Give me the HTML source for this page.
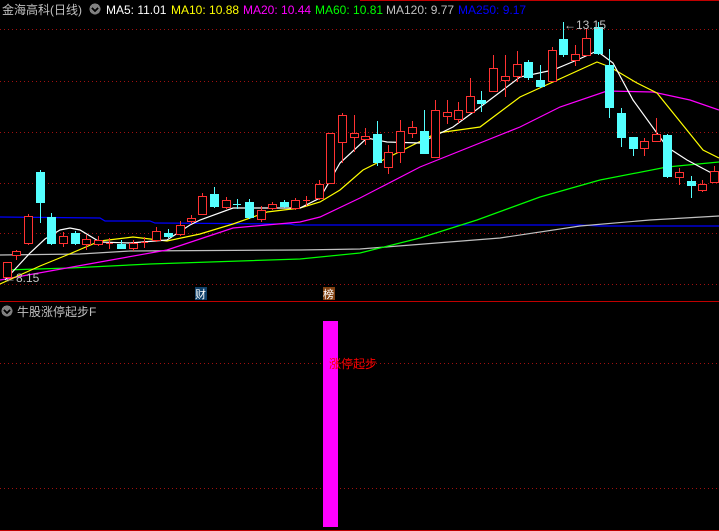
<!DOCTYPE html><html><head><meta charset="utf-8"><style>
body{margin:0;background:#000;width:719px;height:531px;overflow:hidden;font-family:"Liberation Sans","Noto Sans CJK SC",sans-serif}
svg{display:block}
</style></head><body>
<svg width="719" height="531" xmlns="http://www.w3.org/2000/svg" shape-rendering="crispEdges">
<rect width="719" height="531" fill="#000"/>
<line x1="360" y1="0.5" x2="719" y2="0.5" stroke="#c00000"/>
<g stroke="#a01010" stroke-dasharray="1,3">
<line x1="0" y1="29.5" x2="719" y2="29.5"/><line x1="0" y1="81.5" x2="719" y2="81.5"/><line x1="0" y1="132.5" x2="719" y2="132.5"/><line x1="0" y1="183.5" x2="719" y2="183.5"/><line x1="0" y1="233.5" x2="719" y2="233.5"/><line x1="0" y1="284.5" x2="719" y2="284.5"/>
<line x1="0" y1="363.5" x2="719" y2="363.5"/><line x1="0" y1="488.5" x2="719" y2="488.5"/>
</g>
<line x1="0" y1="301.5" x2="719" y2="301.5" stroke="#c00000"/>
<line x1="0" y1="530.5" x2="719" y2="530.5" stroke="#c00000"/>
<g fill="none" stroke-width="1.2" shape-rendering="auto">
<polyline stroke="#0000ff" points="0,217 100,218 105,221 150,221 155,223 290,224 295,225 580,225 600,226 719,226"/>
<polyline stroke="#c0c0c0" points="0,255 80,254 130,251 300,250 360,249 500,238 580,226 650,220 719,216"/>
<polyline stroke="#00ff00" points="5,270 70,268 150,264 300,259 360,253 420,238 477,220 540,197 600,180 667,167 719,162"/>
<polyline stroke="#ff00ff" points="0,280 100,262 167,250 233,228 300,222 320,217 360,198 420,167 520,127 560,107 607,91 653,92 690,100 719,110"/>
<polyline stroke="#ffff00" points="0,284 40,266 67,255 100,241 133,237 167,241 200,234 233,224 267,212 300,208 320,202 340,190 363,170 437,133 480,127 520,97 597,62 610,67 637,83 657,93 703,150 719,158"/>
<polyline stroke="#ffffff" points="5,280 30,253 45,239 60,230 70,228 80,230 100,242 130,243 167,240 190,225 200,220 233,208 300,208 320,198 340,163 367,138 387,142 420,143 453,127 487,102 520,77 553,70 577,60 597,51 613,63 633,100 667,147 687,160 719,177"/>
</g>
<g stroke="#ff3232" fill="#000">
<rect x="3.5" y="262.5" width="8" height="15"/>
<line x1="16.5" y1="250" x2="16.5" y2="260"/><rect x="12.5" y="251.5" width="8" height="4"/>
<line x1="28.5" y1="214" x2="28.5" y2="245"/><rect x="24.5" y="216.5" width="8" height="27"/>
<line x1="63.5" y1="232" x2="63.5" y2="247"/><rect x="59.5" y="236.5" width="8" height="7"/>
<line x1="86.5" y1="235" x2="86.5" y2="250"/><rect x="82.5" y="239.5" width="8" height="5"/>
<line x1="98.5" y1="236" x2="98.5" y2="246"/><rect x="94.5" y="240.5" width="8" height="4"/>
<line x1="133.5" y1="240" x2="133.5" y2="251"/><rect x="129.5" y="243.5" width="8" height="5"/>
<line x1="156.5" y1="227" x2="156.5" y2="242"/><rect x="152.5" y="231.5" width="8" height="9"/>
<line x1="180.5" y1="221" x2="180.5" y2="236"/><rect x="176.5" y="225.5" width="8" height="9"/>
<line x1="191.5" y1="215" x2="191.5" y2="224"/><rect x="187.5" y="218.5" width="8" height="3"/>
<line x1="202.5" y1="193" x2="202.5" y2="215"/><rect x="198.5" y="196.5" width="8" height="18"/>
<line x1="226.5" y1="197" x2="226.5" y2="209"/><rect x="222.5" y="200.5" width="8" height="7"/>
<line x1="261.5" y1="206" x2="261.5" y2="222"/><rect x="257.5" y="210.5" width="8" height="9"/>
<line x1="272.5" y1="202" x2="272.5" y2="210"/><rect x="268.5" y="204.5" width="8" height="4"/>
<line x1="295.5" y1="198" x2="295.5" y2="210"/><rect x="291.5" y="200.5" width="8" height="8"/>
<line x1="319.5" y1="180" x2="319.5" y2="200"/><rect x="315.5" y="184.5" width="8" height="14"/>
<rect x="326.5" y="133.5" width="8" height="50"/>
<line x1="342.5" y1="113" x2="342.5" y2="163"/><rect x="338.5" y="115.5" width="8" height="27"/>
<line x1="354.5" y1="115" x2="354.5" y2="152"/><rect x="350.5" y="133.5" width="8" height="4"/>
<line x1="365.5" y1="128" x2="365.5" y2="145"/><rect x="361.5" y="136.5" width="8" height="3"/>
<line x1="388.5" y1="145" x2="388.5" y2="174"/><rect x="384.5" y="152.5" width="8" height="15"/>
<line x1="400.5" y1="120" x2="400.5" y2="163"/><rect x="396.5" y="131.5" width="8" height="21"/>
<line x1="412.5" y1="121" x2="412.5" y2="138"/><rect x="408.5" y="127.5" width="8" height="6"/>
<line x1="435.5" y1="100" x2="435.5" y2="157"/><rect x="431.5" y="110.5" width="8" height="47"/>
<line x1="447.5" y1="100" x2="447.5" y2="124"/><rect x="443.5" y="112.5" width="8" height="4"/>
<line x1="458.5" y1="102" x2="458.5" y2="123"/><rect x="454.5" y="110.5" width="8" height="9"/>
<line x1="470.5" y1="78" x2="470.5" y2="112"/><rect x="466.5" y="96.5" width="8" height="16"/>
<line x1="493.5" y1="55" x2="493.5" y2="91"/><rect x="489.5" y="68.5" width="8" height="23"/>
<line x1="505.5" y1="55" x2="505.5" y2="97"/><rect x="501.5" y="76.5" width="8" height="4"/>
<line x1="517.5" y1="51" x2="517.5" y2="82"/><rect x="513.5" y="64.5" width="8" height="12"/>
<line x1="552.5" y1="47" x2="552.5" y2="81"/><rect x="548.5" y="50.5" width="8" height="31"/>
<line x1="575.5" y1="45" x2="575.5" y2="66"/><rect x="571.5" y="54.5" width="8" height="6"/>
<line x1="586.5" y1="28" x2="586.5" y2="55"/><rect x="582.5" y="38.5" width="8" height="17"/>
<line x1="644.5" y1="138" x2="644.5" y2="156"/><rect x="640.5" y="141.5" width="8" height="7"/>
<line x1="656.5" y1="118" x2="656.5" y2="141"/><rect x="652.5" y="134.5" width="8" height="7"/>
<line x1="679.5" y1="168" x2="679.5" y2="185"/><rect x="675.5" y="172.5" width="8" height="5"/>
<line x1="702.5" y1="180" x2="702.5" y2="192"/><rect x="698.5" y="184.5" width="8" height="6"/>
<line x1="714.5" y1="166" x2="714.5" y2="183"/><rect x="710.5" y="171.5" width="8" height="11"/>
<line x1="106" y1="243.5" x2="113" y2="243.5"/><line x1="109.5" y1="238" x2="109.5" y2="249"/>
<line x1="141" y1="242.5" x2="148" y2="242.5"/><line x1="144.5" y1="237" x2="144.5" y2="248"/>
<line x1="303" y1="200.5" x2="310" y2="200.5"/><line x1="306.5" y1="196" x2="306.5" y2="206"/>
</g>
<g stroke="#54ffff" fill="#54ffff">
<line x1="40.5" y1="170" x2="40.5" y2="223"/><rect x="36.5" y="172.5" width="8" height="30"/>
<line x1="51.5" y1="213" x2="51.5" y2="245"/><rect x="47.5" y="217.5" width="8" height="26"/>
<line x1="75.5" y1="231" x2="75.5" y2="245"/><rect x="71.5" y="233.5" width="8" height="10"/>
<line x1="121.5" y1="240" x2="121.5" y2="249"/><rect x="117.5" y="244.5" width="8" height="4"/>
<line x1="168.5" y1="229" x2="168.5" y2="238"/><rect x="164.5" y="233.5" width="8" height="3"/>
<line x1="214.5" y1="187" x2="214.5" y2="208"/><rect x="210.5" y="194.5" width="8" height="12"/>
<line x1="249.5" y1="199" x2="249.5" y2="219"/><rect x="245.5" y="202.5" width="8" height="15"/>
<line x1="284.5" y1="200" x2="284.5" y2="208"/><rect x="280.5" y="202.5" width="8" height="4"/>
<line x1="377.5" y1="121" x2="377.5" y2="166"/><rect x="373.5" y="134.5" width="8" height="28"/>
<line x1="424.5" y1="110" x2="424.5" y2="154"/><rect x="420.5" y="131.5" width="8" height="22"/>
<line x1="481.5" y1="91" x2="481.5" y2="112"/><rect x="477.5" y="100.5" width="8" height="3"/>
<line x1="528.5" y1="60" x2="528.5" y2="80"/><rect x="524.5" y="62.5" width="8" height="15"/>
<line x1="540.5" y1="65" x2="540.5" y2="88"/><rect x="536.5" y="80.5" width="8" height="6"/>
<line x1="563.5" y1="22" x2="563.5" y2="57"/><rect x="559.5" y="39.5" width="8" height="15"/>
<line x1="598.5" y1="22" x2="598.5" y2="55"/><rect x="594.5" y="27.5" width="8" height="26"/>
<line x1="609.5" y1="49" x2="609.5" y2="118"/><rect x="605.5" y="65.5" width="8" height="42"/>
<line x1="621.5" y1="108" x2="621.5" y2="147"/><rect x="617.5" y="113.5" width="8" height="24"/>
<line x1="633.5" y1="137" x2="633.5" y2="156"/><rect x="629.5" y="137.5" width="8" height="11"/>
<line x1="667.5" y1="134" x2="667.5" y2="178"/><rect x="663.5" y="135.5" width="8" height="41"/>
<line x1="691.5" y1="176" x2="691.5" y2="198"/><rect x="687.5" y="181.5" width="8" height="4"/>
<line x1="233" y1="204.5" x2="241" y2="204.5"/><line x1="237.5" y1="199" x2="237.5" y2="209"/>
</g>
<g font-size="12">
<text x="2" y="14" fill="#c0c0c0">金海高科(日线)</text>
<circle cx="95" cy="9" r="5.5" fill="#808080"/><path d="M92 8l3 3 3-3" stroke="#000" stroke-width="1.5" fill="none"/>
<text x="106" y="14" fill="#fff">MA5: 11.01</text>
<text x="171" y="14" fill="#ffff00">MA10: 10.88</text>
<text x="243" y="14" fill="#ff00ff">MA20: 10.44</text>
<text x="315" y="14" fill="#00ff00">MA60: 10.81</text>
<text x="386" y="14" fill="#c0c0c0">MA120: 9.77</text>
<text x="458" y="14" fill="#0000ff">MA250: 9.17</text>
<text x="564" y="29" fill="#c0c0c0">←13.15</text>
<text x="4" y="282" fill="#c0c0c0">←8.15</text>
<rect x="195" y="287" width="12" height="13" fill="#10406a"/><text x="195" y="298" fill="#fff" font-size="11">财</text>
<rect x="323" y="287" width="12" height="13" fill="#804010"/><text x="323" y="298" fill="#fff" font-size="11">榜</text>
<circle cx="7" cy="311" r="5.5" fill="#808080"/><path d="M4 310l3 3 3-3" stroke="#000" stroke-width="1.5" fill="none"/>
<text x="17" y="316" fill="#c0c0c0">牛股涨停起步F</text>
</g>
<rect x="323" y="321" width="15" height="206" fill="#ff00ff"/>
<text x="329" y="368" fill="#ff0000" font-size="12" font-family="Liberation Sans,Noto Sans CJK SC,sans-serif">涨停起步</text>
</svg>
</body></html>
